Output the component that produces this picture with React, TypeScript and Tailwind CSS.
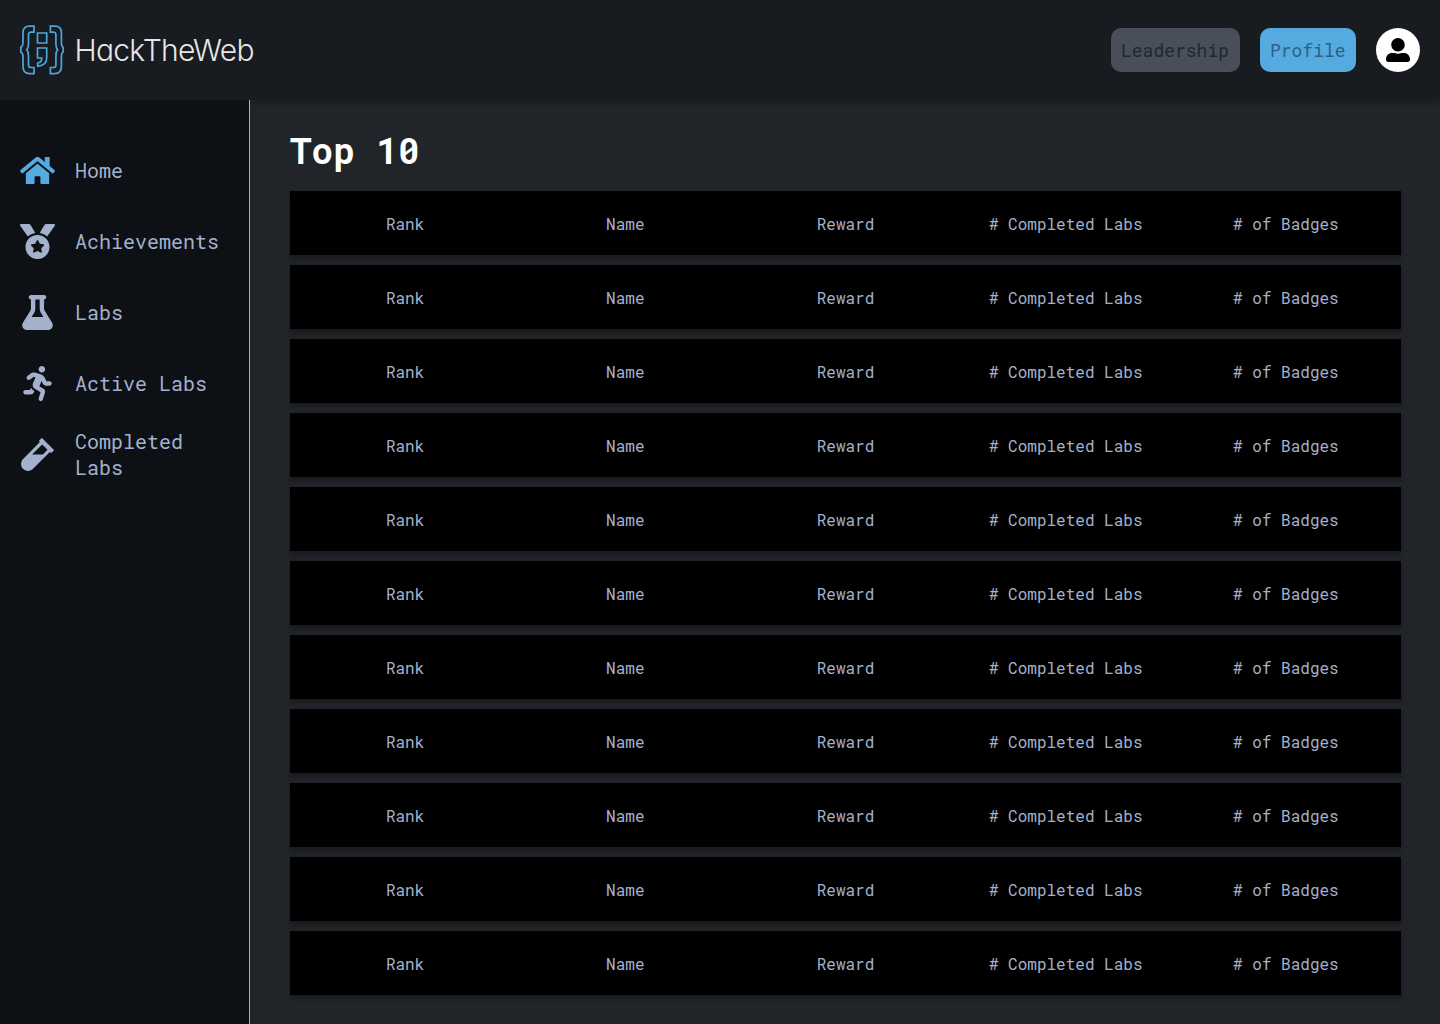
import { FaHome, FaMedal, FaRunning, FaUserAlt, FaVial } from "react-icons/fa";
import { FaFlask } from "react-icons/fa6";

const links = [
  { label: "Home", Icon: FaHome, active: true },
  { label: "Achievements", Icon: FaMedal },
  { label: "Labs", Icon: FaFlask },
  { label: "Active Labs", Icon: FaRunning },
  { label: "Completed Labs", Icon: FaVial },
];

const columns = ["Rank", "Name", "Reward", "# Completed Labs", "# of Badges"];
const rows = Array.from({ length: 11 }, (_, i) => i);

function Logo() {
  return (
    <div className="flex items-center">
      <svg width="44" height="50" viewBox="0 0 44 50" fill="none" stroke="#4ea5dc" strokeWidth="1.7">
        <path d="M14 1.2H9.5C5 1.2 3 3.5 3 8V17C3 20 2.5 21.5.8 22.2V27C2.5 27.7 3 29.2 3 32V41.5C3 46 5 48.6 9.5 48.6H14V42.5H11C9.5 42.5 8.5 42 8.5 40V31C8.5 27.5 8 26 6.8 24.7C8 23.4 8.5 21.8 8.5 18.5V9.5C8.5 8 9.5 7.2 11 7.2H14Z" />
        <path d="M30.4 1.2H34.9C39.4 1.2 41.4 3.5 41.4 8V17C41.4 20 41.7 21.5 43.1 22.2V27C41.7 27.7 41.4 29.2 41.4 32V41.5C41.4 46 39.4 48.6 34.9 48.6H30.4V42.5H33.4C34.9 42.5 35.9 42 35.9 40V31C35.9 27.5 36.4 26 37.6 24.7C36.4 23.4 35.9 21.8 35.9 18.5V9.5C35.9 8 34.9 7.2 33.4 7.2H30.4Z" />
        <path d="M17.5 8H26.7V18H17.5ZM17.5 23H26.7V33C26.7 38 23 41.2 17.7 41.2V38C20.5 37.8 21.8 36 21.8 33H17.5Z" />
      </svg>
      <span className="ml-[10.5px] font-['Inter'] text-[30px] leading-none font-light tracking-[-0.75px] text-[#e6e6e6] [font-feature-settings:'cv11']">
        HackTheWeb
      </span>
    </div>
  );
}

export default function App() {
  return (
    <div className="flex h-[1024px] w-[1440px] flex-col overflow-hidden bg-[#212429] font-['Roboto_Mono','Liberation_Mono',monospace] text-[#a4b1cd]">
      <header className="relative z-10 flex h-[100px] shrink-0 items-center justify-between bg-[#181b20] px-5 shadow-[0_4px_4px_rgba(0,0,0,0.15)]">
        <Logo />
        <div className="flex items-center gap-5 text-[18px]">
          <button className="h-11 w-[129px] rounded-[10px] bg-[#484e5a] pl-2.5 text-left text-[#23272e]">Leadership</button>
          <button className="h-11 w-24 rounded-[10px] bg-[#55aae0] pl-2.5 text-left text-[#2d6085]">Profile</button>
          <div className="flex size-11 items-center justify-center rounded-full bg-white text-black">
            <FaUserAlt size={24} />
          </div>
        </div>
      </header>
      <div className="flex min-h-0 flex-1">
        <aside className="relative z-20 w-[250px] shrink-0 border-r border-[#a4b1cd] bg-[#0d1014] px-5 pt-11">
          <nav className="flex flex-col gap-[19px]">
            {links.map(({ label, Icon, active }) => (
              <a key={label} className="flex h-[52px] items-center gap-5 text-[20px] leading-[26px]">
                <Icon size={35} className={active ? "shrink-0 text-[#55aae0]" : "shrink-0"} />
                <span>{label}</span>
              </a>
            ))}
          </nav>
        </aside>
        <main className="flex-1 pt-[26px] pr-[39px] pl-10">
          <h1 className="mb-[17px] text-[36px] leading-[48px] font-bold text-white">Top 10</h1>
          <div className="flex flex-col gap-2.5">
            {rows.map((row) => (
              <div
                key={row}
                className="grid h-16 grid-cols-5 items-center bg-black px-[5px] pt-px text-center text-[16px] shadow-[0_4px_4px_rgba(0,0,0,0.25)]"
              >
                {columns.map((column) => (
                  <span key={column}>{column}</span>
                ))}
              </div>
            ))}
          </div>
        </main>
      </div>
    </div>
  );
}
